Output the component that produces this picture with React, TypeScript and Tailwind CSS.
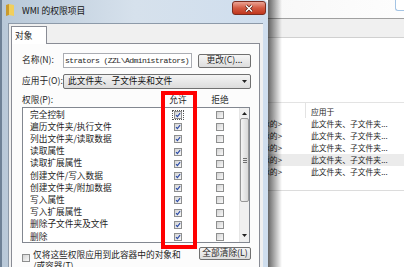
import React from "react";

// 権限の一覧（表示順）
const perms = [
  "完全控制",
  "遍历文件夹/执行文件",
  "列出文件夹/读取数据",
  "读取属性",
  "读取扩展属性",
  "创建文件/写入数据",
  "创建文件夹/附加数据",
  "写入属性",
  "写入扩展属性",
  "删除子文件夹及文件",
  "删除",
];

function Check() {
  return (
    <svg width="6" height="6" viewBox="0 0 6 6" className="block">
      <path d="M1 3.1 L2.4 4.7 L5.1 1.1" fill="none" stroke="#2a4aa6" strokeWidth="1.1" />
    </svg>
  );
}

function Box({ checked = false }: { checked?: boolean }) {
  return (
    <span className="flex h-[8px] w-[8px] shrink-0 items-center justify-center border border-[#8e8f8f] bg-gradient-to-br from-[#d4d4d4] to-[#f8f8f8]">
      {checked && <Check />}
    </span>
  );
}

function Tri({ down = false }: { down?: boolean }) {
  return (
    <svg width="5" height="3" viewBox="0 0 5 3" className="block">
      <path d={down ? "M0 0 L5 0 L2.5 3 Z" : "M0 3 L5 3 L2.5 0 Z"} fill="#222" />
    </svg>
  );
}

export default function App() {
  return (
    <div className="relative h-[267px] w-[404px] overflow-hidden bg-white text-[8.7px] text-[#1e1e1e] [font-family:'Noto_Sans_CJK_SC','Noto_Sans',sans-serif]">
      {/* 後ろのウィンドウ */}
      <div className="flex h-[18px] bg-gradient-to-r from-[#eeeeee] to-[#fdfdfd]">
        <div className="ml-auto h-[11px] w-[9px] rounded-bl-[3px] border-b border-l border-[#a4c4e4] bg-white" />
      </div>
      <div className="h-[20px] border-y border-t-[#a0a0a0] border-b-[#d0d0d0] bg-[#f0f0f0]" />
      <div className="mt-[64px] h-[89px] border-y border-t-[#e3e3e3] border-b-[#dcdcdc] text-[7.8px]">
        <div className="flex h-[15px]">
          <div className="w-[306px] border-r border-[#e3e3e3]" />
          <div className="pl-[5px] pt-[4px] leading-[9px]">应用于</div>
        </div>
        {[0, 1, 2, 3, 4].map((i) => (
          <div
            key={i}
            className={i === 3 ? "flex h-[12px] items-center bg-[#ebebeb]" : "flex h-[12px] items-center"}
          >
            <div className="w-[306px] pr-[24px] text-right leading-none">&lt;不是继承的&gt;</div>
            <div className="pl-[5px] leading-none">此文件夹、子文件夹...</div>
          </div>
        ))}
      </div>

      {/* ウィンドウの影 */}
      <div className="absolute left-[268px] top-0 h-full w-[14px] bg-gradient-to-r from-black/60 to-transparent" />

      {/* ダイアログ本体（下は画面外へ続く） */}
      <div className="absolute left-0 top-0 flex h-[300px] w-[268px] flex-col rounded-tr-[5px] border-l-[2px] border-l-[#6e8196] bg-gradient-to-r from-[#b8c8d8] via-[#d6e1ec] to-[#cfdeee]">
        <div className="flex h-[23px] shrink-0 items-start">
          <svg width="8" height="12" viewBox="0 0 8 12" className="ml-[4px] mt-[4px] block">
            <path d="M0 1 L3 0 L3 11 L0 12 Z" fill="#c99a2e" />
            <path d="M3 0 L8 1 L8 12 L3 11 Z" fill="#f1cf5d" />
          </svg>
          <span className="ml-[8px] mt-[5px] text-[8.8px] leading-[12px] text-[#111]">WMI 的权限项目</span>
          <div className="ml-auto mr-[2px] mt-[1px] flex h-[14px] w-[34px] items-center justify-center rounded-[3px] border border-[#7b2d20] bg-gradient-to-b from-[#eaa394] via-[#d35a42] to-[#c0361c]">
            <svg width="10" height="9" viewBox="0 0 10 9" className="block">
              <path d="M2 1.5 L8 7.5 M8 1.5 L2 7.5" stroke="#5a1d12" strokeWidth="3" />
              <path d="M2 1.5 L8 7.5 M8 1.5 L2 7.5" stroke="#ffffff" strokeWidth="1.5" />
            </svg>
          </div>
        </div>

        <div className="flex flex-1 pl-[6px] pr-[5px]">
          <div className="flex flex-1 flex-col border-l border-t border-[#8d9aa9] bg-[#f0f0f0] pl-[2px] pr-[3px] pt-[2px]">
            <div className="relative z-10 -mb-px flex h-[18px] w-[36px] shrink-0 items-center border border-b-0 border-[#898c95] bg-white pl-[3px]">
              对象
            </div>
            <div className="flex flex-1 flex-col border border-[#898c95] bg-[#fcfcfc] pl-[10px] pr-[8px] pt-[9px]">
              {/* 名称 */}
              <div className="flex h-[15px] shrink-0 items-center">
                <span className="w-[41px] leading-none">名称(N):</span>
                <div className="flex h-[15px] w-[129px] items-center overflow-hidden border border-[#abadb3] bg-white">
                  <span className="whitespace-pre pl-[1px] text-[8px] tracking-[-0.52px] [font-family:'Liberation_Mono',monospace]">
                    strators (ZZL\Administrators)
                  </span>
                </div>
                <div className="ml-auto flex h-[14px] w-[53px] items-center justify-center rounded-[2px] border border-[#707070] bg-gradient-to-b from-[#f6f6f6] to-[#dddddd] leading-none">
                  更改(C)...
                </div>
              </div>

              {/* 应用于 */}
              <div className="mt-[6px] flex h-[15px] shrink-0 items-center">
                <span className="w-[41px] leading-none">应用于(O):</span>
                <div className="flex h-[15px] flex-1 items-center rounded-[2px] border border-[#707070] bg-gradient-to-b from-[#f4f4f4] to-[#dcdcdc] pl-[4px] pr-[3px]">
                  <span className="flex-1 leading-none text-[#111]">此文件夹、子文件夹和文件</span>
                  <Tri down />
                </div>
              </div>

              {/* 見出し */}
              <div className="mt-[4px] flex h-[14px] shrink-0 items-center">
                <span className="w-[146px] leading-none">权限(P):</span>
                <span className="w-[20px] text-center leading-none">允许</span>
                <span className="w-[22px]" />
                <span className="w-[20px] text-center leading-none">拒绝</span>
              </div>

              {/* 権限リスト */}
              <div className="flex h-[136px] w-[228px] shrink-0 border border-[#828790] bg-white">
                <div className="flex-1 pt-[1px]">
                  {perms.map((p, i) => (
                    <div key={p} className="flex h-[12.2px] items-center">
                      <span className="w-[145px] pl-[7px] leading-none">{p}</span>
                      <span className="flex w-[20px] justify-center">
                        {i === 0 ? (
                          <span className="flex h-[10px] w-[12px] items-center justify-center border border-dotted border-[#555]">
                            <Box checked />
                          </span>
                        ) : (
                          <Box checked />
                        )}
                      </span>
                      <span className="w-[22px]" />
                      <span className="flex w-[20px] justify-center">
                        <Box />
                      </span>
                    </div>
                  ))}
                </div>
                <div className="flex w-[10px] flex-col items-center border-l border-[#e6e6e6] bg-[#f0f0f0]">
                  <div className="flex h-[10px] shrink-0 items-center justify-center">
                    <Tri />
                  </div>
                  <div className="flex h-[84px] w-[9px] shrink-0 flex-col items-center justify-center gap-[1px] rounded-[2px] border border-[#979797] bg-gradient-to-r from-[#f4f4f4] to-[#d8d8d8]">
                    <span className="h-px w-[4px] bg-[#707070]" />
                    <span className="h-px w-[4px] bg-[#707070]" />
                    <span className="h-px w-[4px] bg-[#707070]" />
                  </div>
                  <div className="flex-1" />
                  <div className="mb-[2px] flex h-[10px] shrink-0 items-center justify-center">
                    <Tri down />
                  </div>
                </div>
              </div>

              {/* 下段 */}
              <div className="mt-[4px] flex shrink-0 items-start">
                <span className="mt-[7px]">
                  <Box />
                </span>
                <span className="ml-[3px] mt-[2px] leading-[11px]">
                  仅将这些权限应用到此容器中的对象和
                  <br />
                  /或容器(T)
                </span>
                <div className="ml-auto flex h-[13px] w-[52px] items-center justify-center rounded-[2px] border border-[#707070] bg-gradient-to-b from-[#f6f6f6] to-[#dddddd] leading-none">
                  全部清除(L)
                </div>
              </div>
            </div>
          </div>
        </div>
      </div>

      {/* 赤枠の注記 */}
      <div className="absolute left-[161px] top-[91px] h-[158px] w-[36px] border-[4px] border-[#ff0000]" />
    </div>
  );
}
